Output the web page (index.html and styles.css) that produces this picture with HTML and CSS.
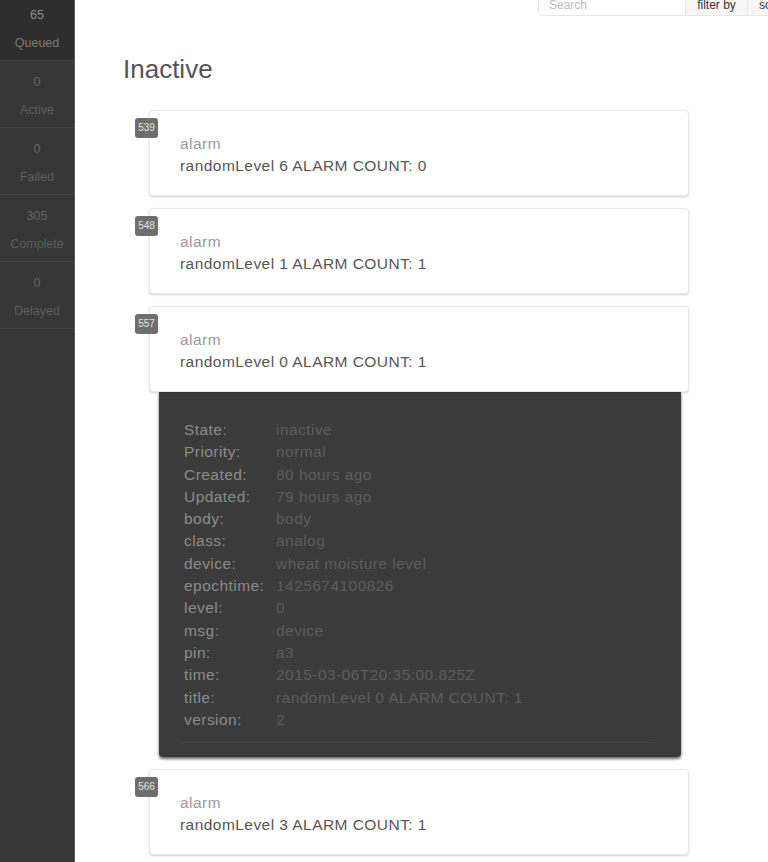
FILE: index.html
```html
<!DOCTYPE html>
<html>
<head>
<meta charset="utf-8">
<link rel="stylesheet" href="styles.css">
</head>
<body>
<aside class="sidebar">
  <ul class="states">
    <li class="state current"><span class="count">65</span><span class="name">Queued</span></li>
    <li class="state"><span class="count">0</span><span class="name">Active</span></li>
    <li class="state"><span class="count">0</span><span class="name">Failed</span></li>
    <li class="state"><span class="count">305</span><span class="name">Complete</span></li>
    <li class="state"><span class="count">0</span><span class="name">Delayed</span></li>
  </ul>
</aside>
<main class="main">
  <div class="toolbar">
    <input class="search" type="text" placeholder="Search">
    <button class="btn filter">filter by</button>
    <button class="btn sort">sort</button>
  </div>
  <h1 class="title">Inactive</h1>
  <div class="jobs">
    <div class="job">
      <div class="card">
        <span class="badge">539</span>
        <div class="type">alarm</div>
        <div class="job-title">randomLevel 6 ALARM COUNT: 0</div>
      </div>
    </div>
    <div class="job">
      <div class="card">
        <span class="badge">548</span>
        <div class="type">alarm</div>
        <div class="job-title">randomLevel 1 ALARM COUNT: 1</div>
      </div>
    </div>
    <div class="job">
      <div class="card">
        <span class="badge">557</span>
        <div class="type">alarm</div>
        <div class="job-title">randomLevel 0 ALARM COUNT: 1</div>
      </div>
      <div class="details">
        <table class="props">
          <tr><td class="k">State:</td><td class="v">inactive</td></tr>
          <tr><td class="k">Priority:</td><td class="v">normal</td></tr>
          <tr><td class="k">Created:</td><td class="v">80 hours ago</td></tr>
          <tr><td class="k">Updated:</td><td class="v">79 hours ago</td></tr>
          <tr><td class="k">body:</td><td class="v">body</td></tr>
          <tr><td class="k">class:</td><td class="v">analog</td></tr>
          <tr><td class="k">device:</td><td class="v">wheat moisture level</td></tr>
          <tr><td class="k">epochtime:</td><td class="v">1425674100826</td></tr>
          <tr><td class="k">level:</td><td class="v">0</td></tr>
          <tr><td class="k">msg:</td><td class="v">device</td></tr>
          <tr><td class="k">pin:</td><td class="v">a3</td></tr>
          <tr><td class="k">time:</td><td class="v">2015-03-06T20:35:00.825Z</td></tr>
          <tr><td class="k">title:</td><td class="v">randomLevel 0 ALARM COUNT: 1</td></tr>
          <tr><td class="k">version:</td><td class="v">2</td></tr>
        </table>
        <div class="rule"></div>
      </div>
    </div>
    <div class="job">
      <div class="card">
        <span class="badge">566</span>
        <div class="type">alarm</div>
        <div class="job-title">randomLevel 3 ALARM COUNT: 1</div>
      </div>
    </div>
  </div>
</main>
</body>
</html>
```
FILE: styles.css
```css
html, body {
  margin: 0;
  padding: 0;
  height: 862px;
  overflow: hidden;
  background: #fff;
  font-family: "Liberation Sans", Arial, sans-serif;
}
body {
  display: flex;
  align-items: stretch;
}
.sidebar {
  width: 74px;
  flex: 0 0 74px;
  background: #363636;
  border-right: 1px solid #5a5a5a;
}
.states {
  list-style: none;
  margin: -6px 0 0;
  padding: 0;
}
.state {
  border-bottom: 1px solid #444;
  display: flex;
  flex-direction: column;
  align-items: center;
  padding-top: 14px;
  box-sizing: border-box;
  height: 67px;
  font-size: 12.5px;
  line-height: 14px;
}
.state .count {
  color: #666;
}
.state .name {
  color: #5f5f5f;
  margin-top: 14px;
}
.state.current {
  background: #2d2d2d;
}
.state.current .count {
  color: #8a8a8a;
}
.state.current .name {
  color: #7a7a7a;
}
.main {
  flex: 1;
  min-width: 0;
  padding-left: 48px;
}
.toolbar {
  display: flex;
  margin-top: -6px;
  height: 22px;
  padding-left: 415px;
  white-space: nowrap;
}
.search {
  width: 148px;
  height: 22px;
  box-sizing: border-box;
  border: 1px solid #e6e6e6;
  border-radius: 4px 0 0 4px;
  padding: 0 10px;
  font: 12px "Liberation Sans", Arial, sans-serif;
  color: #555;
  outline: none;
}
.search::placeholder {
  color: #bbb;
}
.btn {
  height: 22px;
  box-sizing: border-box;
  border: 1px solid #e6e6e6;
  border-left: none;
  background: #f6f6f6;
  font: 12px "Liberation Sans", Arial, sans-serif;
  color: #333;
  padding: 0 11px;
  flex: 0 0 auto;
}
.filter {
  width: 62px;
}
.title {
  margin: 38px 0 0;
  font-size: 26px;
  line-height: 30px;
  font-weight: normal;
  color: #555;
}
.jobs {
  margin-top: 26px;
  padding-left: 26px;
  width: 540px;
}
.job {
  margin-bottom: 12px;
}
.card {
  position: relative;
  height: 86px;
  box-sizing: border-box;
  border: 1px solid #e8e8e8;
  border-radius: 4px;
  box-shadow: 0 1px 2px rgba(0, 0, 0, 0.18);
  background: #fff;
  padding: 22px 30px 18px;
  font-size: 15.5px;
  letter-spacing: 0.45px;
  line-height: 22px;
}
.badge {
  position: absolute;
  left: -15px;
  top: 7px;
  width: 23px;
  height: 20px;
  border-radius: 3px;
  background: #6e6e6e;
  color: #e2e2e2;
  font-size: 10px;
  letter-spacing: 0;
  line-height: 20px;
  text-align: center;
}
.type {
  color: #999;
}
.job-title {
  color: #555;
}
.details {
  margin: 0 8px 0 10px;
  background: #3b3b3b;
  border-radius: 0 0 4px 4px;
  box-shadow: 0 2px 3px rgba(0, 0, 0, 0.6);
  padding: 27px 26px 14px 21px;
}
.props {
  border-collapse: collapse;
  margin-left: 4px;
  font-size: 15.5px;
  letter-spacing: 0.45px;
  line-height: 22.3px;
}
.props td {
  padding: 0;
  white-space: nowrap;
}
.props .k {
  width: 92px;
  color: #8c8c8c;
}
.props .v {
  color: #5e5e5e;
}
.rule {
  margin-top: 11px;
  height: 1px;
  background: #464646;
}
```
